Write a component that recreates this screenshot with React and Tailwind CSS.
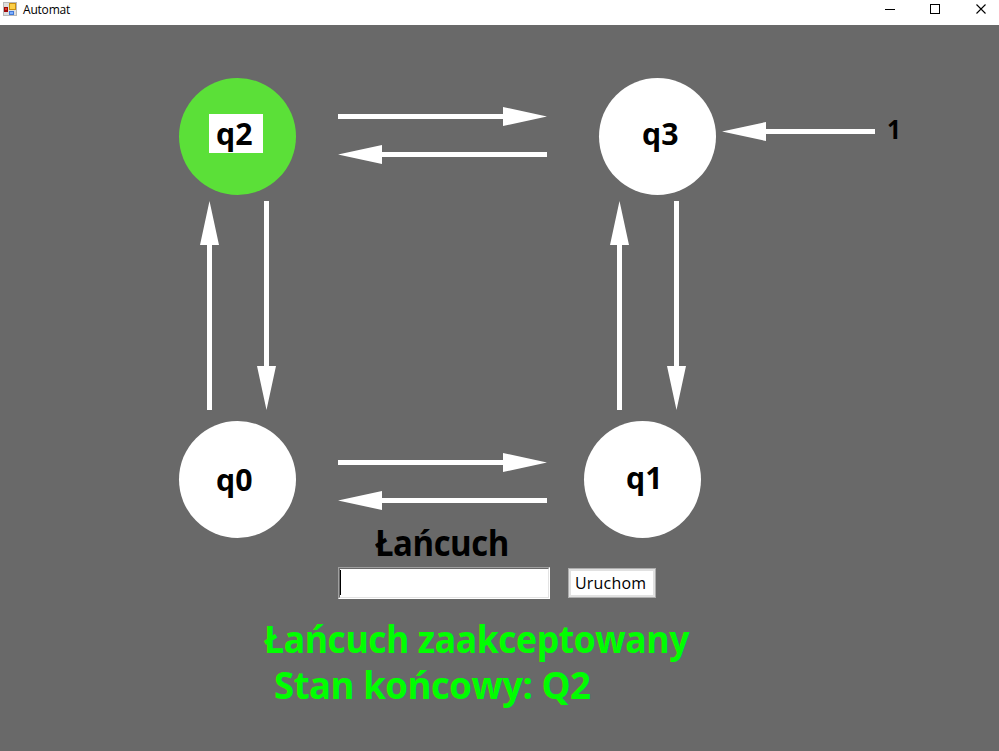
import React from "react";

const NODES = [
  { id: "q2", cx: 237.5, cy: 136.5, tx: 216, ty: 145, w: 36.5, active: true },
  { id: "q3", cx: 657.5, cy: 136.5, tx: 642, ty: 145, w: 36.5 },
  { id: "q0", cx: 237.5, cy: 479.5, tx: 216, ty: 491, w: 36.5 },
  { id: "q1", cx: 642.5, cy: 479.5, tx: 626, ty: 489, w: 36.5 },
];

// Each arrow starts at (x, y) and points right, rotated by `angle`.
const ARROWS = [
  { x: 338, y: 116.5, len: 209, angle: 0 },
  { x: 547, y: 154.5, len: 209, angle: 180 },
  { x: 338, y: 462.5, len: 209, angle: 0 },
  { x: 547, y: 500.5, len: 209, angle: 180 },
  { x: 875, y: 131.5, len: 153, angle: 180 },
  { x: 209.5, y: 410, len: 209, angle: -90 },
  { x: 266.5, y: 201, len: 209, angle: 90 },
  { x: 619.5, y: 410, len: 209, angle: -90 },
  { x: 676.5, y: 201, len: 209, angle: 90 },
];

function Arrow({ x, y, len, angle }) {
  const neck = len - 44;
  return (
    <path
      transform={`translate(${x} ${y}) rotate(${angle})`}
      d={`M0 -2.5H${neck}V-9.5L${len} 0L${neck} 9.5V2.5H0Z`}
      fill="#fff"
    />
  );
}

function TitleBar() {
  return (
    <header className="flex h-[25px] items-start bg-white">
      <svg className="ml-[3px] mt-[2px]" width="14" height="14" shapeRendering="crispEdges">
        <rect width="14" height="14" fill="#b8b8b8" />
        <rect x="1" y="1" width="12" height="12" fill="#dedede" />
        <rect x="6" y="1" width="7" height="7" fill="#c98f10" />
        <rect x="7" y="2" width="5" height="5" fill="#fdd047" />
        <rect x="1" y="5" width="4" height="5" fill="#a00808" />
        <rect x="2" y="6" width="2" height="2" fill="#d84030" />
        <rect x="6" y="9" width="5" height="4" fill="#3f78d8" />
        <rect x="7" y="10" width="3" height="2" fill="#7fb0ff" />
      </svg>
      <h1 className="ml-[6px] mt-px text-[12px] leading-[18px] tracking-[-0.2px] text-black">Automat</h1>
      <svg className="ml-auto mr-[12px] mt-[4px]" width="102" height="10" fill="none" stroke="#000">
        <path d="M0 5.5H10M45.5 0.5H54.5V9.5H45.5Z" shapeRendering="crispEdges" />
        <path d="M91.5 0.5L100.5 9.5M100.5 0.5L91.5 9.5" strokeWidth="1.1" />
      </svg>
    </header>
  );
}

function Diagram() {
  return (
    <svg className="block h-[500px] w-[999px] shrink-0 overflow-visible" viewBox="0 25 999 500" fontWeight="700">
      {ARROWS.map((a, i) => (
        <Arrow key={i} {...a} />
      ))}
      {NODES.map((n) => (
        <g key={n.id}>
          <circle cx={n.cx} cy={n.cy} r="58.5" fill={n.active ? "#5be038" : "#fff"} />
          {n.active && <rect x="209" y="114" width="54" height="39" fill="#fff" />}
          <text x={n.tx} y={n.ty} fontSize="31" textLength={n.w} lengthAdjust="spacingAndGlyphs">
            {n.id}
          </text>
        </g>
      ))}
      <text x="887" y="139" fontSize="26" textLength="14" lengthAdjust="spacingAndGlyphs">1</text>
    </svg>
  );
}

export default function App() {
  return (
    <div className="flex h-[751px] w-[999px] flex-col overflow-hidden bg-[#696969] font-['Open_Sans','Noto_Sans',sans-serif] text-black">
      <TitleBar />
      <Diagram />
      <main className="flex flex-col items-start">
        <label htmlFor="chain" className="ml-[375px] h-[42px] origin-left scale-x-[0.94] whitespace-nowrap text-[35px] font-bold leading-[36px] tracking-[-0.5px]">
          Łańcuch
        </label>
        <div className="ml-[338px] flex h-[32px] items-center gap-[18px]">
          <div className="h-[32px] w-[212px] border border-b-white border-l-[#a0a0a0] border-r-white border-t-[#a0a0a0]">
            <div className="flex h-full items-start border border-b-[#e3e3e3] border-l-[#696969] border-r-[#e3e3e3] border-t-[#696969] bg-white pt-px">
              <span className="h-[25px] w-px shrink-0 bg-black" />
              <input id="chain" className="min-w-0 flex-1 outline-none" />
            </div>
          </div>
          <button className="flex h-[30px] w-[88px] border border-[#adadad] bg-white">
            <span className="flex h-full w-full items-center whitespace-nowrap border-2 border-[#e1e1e1] pl-[4px] text-[16px] leading-none tracking-[0.2px]">
              Uruchom
            </span>
          </button>
        </div>
        <p className="ml-[264px] mt-[17px] whitespace-pre text-[37px] font-bold leading-[46px] text-[#00ff00]">
          <span className="block origin-left scale-x-[0.962] tracking-[-0.5px]">Łańcuch zaakceptowany</span>
          <span className="ml-[10px] block origin-left scale-x-[0.988] tracking-[-0.5px]">Stan końcowy: Q2</span>
        </p>
      </main>
    </div>
  );
}
